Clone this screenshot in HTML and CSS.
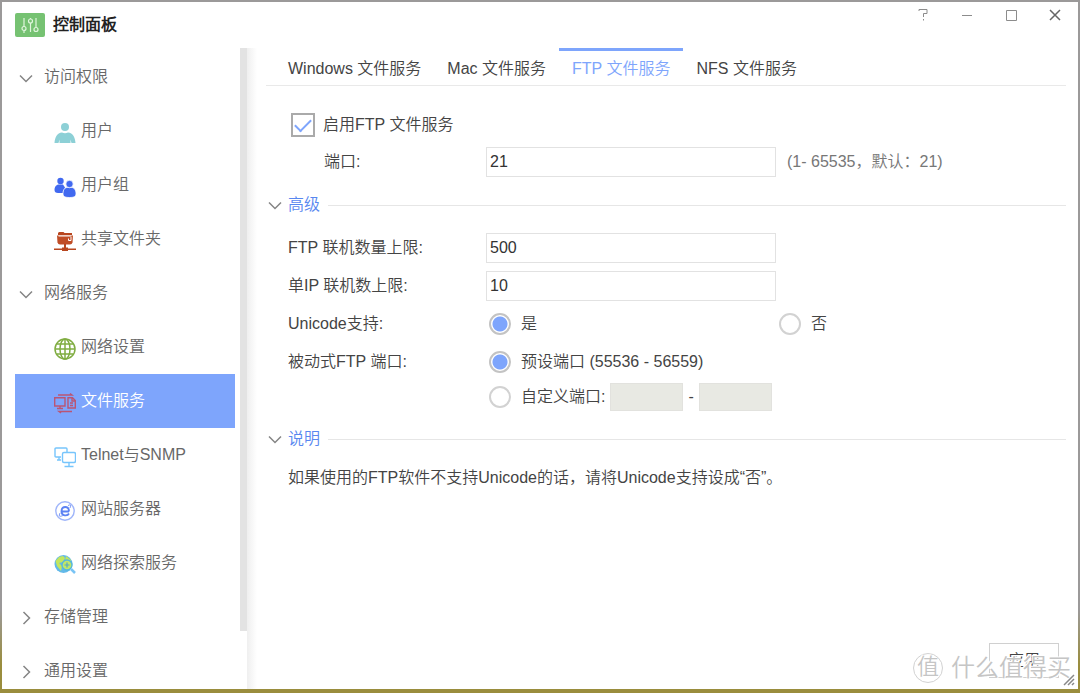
FILE: index.html
```html
<!DOCTYPE html>
<html lang="zh-CN">
<head>
<meta charset="utf-8">
<title>控制面板</title>
<link rel="stylesheet" href="styles.css">
</head>
<body>
<div class="window">
  <header class="titlebar">
    <svg class="app-icon" viewBox="0 0 30 24" aria-hidden="true"><rect width="30" height="24" rx="2" fill="#76c272"/><g fill="none" stroke="#e0f5dd" stroke-width="1.2"><path d="M9 5v9M9 18v2M15.500 5v1M15.500 10v9M21 5v9.500"/><circle cx="9" cy="15.500" r="2"/><circle cx="15.500" cy="8" r="2"/><circle cx="21" cy="16.500" r="2"/></g></svg>
    <h1 class="title">控制面板</h1>
    <div class="window-buttons">
      <button class="window-button" type="button" aria-label="帮助"><svg viewBox="0 0 14 14"><path d="M3 3V1.500H11V5.500H7.500V9M7.500 11V12.500"/></svg></button>
      <button class="window-button" type="button" aria-label="最小化"><svg viewBox="0 0 14 14"><path d="M2 7.500H12"/></svg></button>
      <button class="window-button" type="button" aria-label="最大化"><svg viewBox="0 0 14 14"><path d="M2.500 2.500H12.500V12.500H2.500Z"/></svg></button>
      <button class="window-button close" type="button" aria-label="关闭"><svg viewBox="0 0 14 14"><path d="M2 2L12 12M12 2L2 12"/></svg></button>
    </div>
  </header>
  <div class="body">
    <nav class="sidebar">
      <div class="nav-list">
        <button class="group" type="button"><svg class="chevron" viewBox="0 0 14 14"><path d="M1 4.500L7 10.500L13 4.500"/></svg>访问权限</button>
        <a class="item" href="#"><svg class="icon" viewBox="0 0 22 22"><g fill="#8dd0d6"><circle cx="11" cy="5" r="4"/><path d="M.5 21C1 15 3 11 8 10.500Q11 12 14 10.500C19 11 21 15 21.500 21H17.500L16.500 17.500V21H5.500V17.500L4.500 21Z"/></g></svg>用户</a>
        <a class="item" href="#"><svg class="icon" viewBox="0 0 22 22"><g fill="#4169f0"><circle cx="6.500" cy="5" r="3.200"/><path d="M.5 14C.5 10 3 8.500 5 8.500H9L11 11.500L9 17H4Q.5 17 .5 14Z"/></g><g fill="#4169f0" stroke="#fff" stroke-width=".8"><path d="M9 17.500C9 13.500 11 11.500 13 11.500H18C20 11.500 22 14 22 17.500C22 20.500 20 21.500 15.500 21.500S9 20.500 9 17.500Z"/><circle cx="15.500" cy="8" r="3.700"/></g></svg>用户组</a>
        <a class="item" href="#"><svg class="icon" viewBox="0 0 22 22"><path d="M5 2H9.500L10.500 3H18V5H4V3Z" fill="#b8461f"/><path d="M3 5.500H19L18.500 12.500Q18 14.500 16 14.500H6Q4 14.500 3.500 12.500Z" fill="#c04d26"/><path d="M4.500 6H17.500M14.500 8.500V10.500H17V7" stroke="#fff" fill="none"/><path d="M10 14H12V17.500H14V18.500H22V20H14V21H8V20H0V18.500H8V17.500H10Z" fill="#b8461f"/></svg>共享文件夹</a>
        <button class="group" type="button"><svg class="chevron" viewBox="0 0 14 14"><path d="M1 4.500L7 10.500L13 4.500"/></svg>网络服务</button>
        <a class="item" href="#"><svg class="icon" viewBox="0 0 22 22" fill="none" stroke="#80ad42" stroke-width="1.500"><circle cx="11" cy="11" r="10"/><ellipse cx="11" cy="11" rx="5" ry="10"/><path d="M11 1V21M1 11H21M2.500 6H19.500M2.500 16H19.500"/></svg>网络设置</a>
        <a class="item selected" href="#" aria-current="page"><svg class="icon" viewBox="0 0 22 22" fill="none" stroke="#ba5574" stroke-width="1.400"><path d="M4 3H18L16 1.500M18 19.500H5L7 21M.7 5.700H11V14H.7ZM6 14V16.500M3 16.500H9M14 5.700H18.500L21.300 8.500V16H14ZM18 6V9H21M16 11H19M16 13.500H19"/></svg>文件服务</a>
        <a class="item" href="#"><svg class="icon" viewBox="0 0 22 22" fill="none" stroke="#77c5fc" stroke-width="1.400"><path d="M7 11H2Q1 11 1 10V3Q1 2 2 2H12Q13 2 13 3V6M5 11V14M3 14H7"/><rect x="8.500" y="6.500" width="13" height="10" rx="1.500"/><path d="M15 17V20M10.500 20.500H19.500"/></svg>Telnet与SNMP</a>
        <a class="item" href="#"><svg class="icon" viewBox="0 0 22 22" fill="none"><circle cx="11" cy="11" r="9.200" stroke="#9fb5fa" stroke-width="1.400"/><path d="M15 11.500H7.500C7.500 5.500 15 5.500 15 11.500M7.500 11.500C7.500 16 13.500 16.500 15 13.500" stroke="#5c82f3" stroke-width="1.800"/><path d="M14 5.500Q18 3.500 16 8M6 13Q3.500 18 9 15.500" stroke="#809cf5"/></svg>网站服务器</a>
        <a class="item" href="#"><svg class="icon" viewBox="0 0 22 22"><circle cx="9.500" cy="10" r="9" fill="#63b9e9"/><path d="M5 3L9 2L11 4L9 8L5 9L8 12L7 17L3 12L1.500 7ZM12 2L17 6L16 9L11 7Z" fill="#c3e65c"/><circle cx="13" cy="11" r="5" fill="#c1e669" stroke="#54b6dc" stroke-width="1.300"/><path d="M10.500 11H15.500M13 8.500V13.500" stroke="#54a9c3" stroke-width="1.200"/><path d="M17 15L21 19" stroke="#79c4f5" stroke-width="2.500"/></svg>网络探索服务</a>
        <button class="group" type="button"><svg class="chevron" viewBox="0 0 14 14"><path d="M4.500 1L10.500 7L4.500 13"/></svg>存储管理</button>
        <button class="group" type="button"><svg class="chevron" viewBox="0 0 14 14"><path d="M4.500 1L10.500 7L4.500 13"/></svg>通用设置</button>
      </div>
      <div class="scroll-track"><div class="scroll-thumb"></div></div>
    </nav>
    <main class="main">
      <div class="tabs" role="tablist">
        <button class="tab" type="button" role="tab">Windows 文件服务</button>
        <button class="tab" type="button" role="tab">Mac 文件服务</button>
        <button class="tab active" type="button" role="tab" aria-selected="true">FTP 文件服务</button>
        <button class="tab" type="button" role="tab">NFS 文件服务</button>
      </div>
      <form class="form">
        <div class="row enable">
          <input class="check" type="checkbox" id="enable" checked><label for="enable">启用FTP 文件服务</label>
        </div>
        <div class="row">
          <label class="label indented" for="port">端口:</label>
          <input class="field" type="text" id="port" value="21">
          <span class="hint">(1- 65535，默认：21)</span>
        </div>
        <h2 class="section"><svg class="chevron" viewBox="0 0 14 14"><path d="M1 4.500L7 10.500L13 4.500"/></svg>高级</h2>
        <div class="row">
          <label class="label" for="max">FTP 联机数量上限:</label>
          <input class="field" type="text" id="max" value="500">
        </div>
        <div class="row">
          <label class="label" for="max-ip">单IP 联机数上限:</label>
          <input class="field" type="text" id="max-ip" value="10">
        </div>
        <div class="row">
          <span class="label">Unicode支持:</span>
          <label class="option wide"><input class="radio" type="radio" name="unicode" checked>是</label>
          <label class="option"><input class="radio" type="radio" name="unicode">否</label>
        </div>
        <div class="row">
          <span class="label">被动式FTP 端口:</span>
          <label class="option"><input class="radio" type="radio" name="passive" checked>预设端口 (55536 - 56559)</label>
        </div>
        <div class="row custom">
          <label class="option"><input class="radio" type="radio" name="passive">自定义端口:</label>
          <input class="range" type="text" aria-label="起始端口" disabled>
          <span>-</span>
          <input class="range" type="text" aria-label="结束端口" disabled>
        </div>
        <h2 class="section"><svg class="chevron" viewBox="0 0 14 14"><path d="M1 4.500L7 10.500L13 4.500"/></svg>说明</h2>
        <p class="note">如果使用的FTP软件不支持Unicode的话，请将Unicode支持设成“否”。</p>
        <div class="actions"><button class="apply" type="button">应用</button></div>
      </form>
    </main>
  </div>
  <div class="watermark"><span class="watermark-badge">值</span><span>什么值得买</span></div>
  <svg class="grip" viewBox="0 0 12 12"><path d="M1 11L11 1M5 11L11 5M9 11L11 9"/></svg>
</div>
</body>
</html>
```
FILE: styles.css
```css
* { box-sizing: border-box; }

body {
  margin: 0;
  height: 100vh;
  padding: 2px 2px 4px;
  background: linear-gradient(#9b9999 0 88%, #9a8d3d 96%);
  color: #444;
  font: 350 16px/24px "Liberation Sans", "Noto Sans CJK SC DemiLight", "Noto Sans CJK SC", sans-serif;
}

button, input { font: inherit; color: inherit; }
button { border: 0; padding: 0; background: none; }
svg { flex: none; }

.window {
  position: relative;
  display: flex;
  flex-direction: column;
  height: 100%;
  background: #fff;
}

.titlebar {
  display: flex;
  align-items: flex-start;
  height: 46px;
  flex: none;
  padding: 11px 12px 0 13px;
}
.app-icon { width: 30px; height: 24px; }
.title { margin: 0 0 0 8px; font-size: 16px; font-weight: 700; line-height: 24px; color: #222; }
.window-buttons { display: flex; gap: 30px; margin: -5px 4px 0 auto; }
.window-button { width: 14px; height: 14px; display: flex; }
.window-button svg { width: 14px; height: 14px; fill: none; stroke: #8c8c8c; }
.window-button.close svg { stroke: #666; stroke-width: 1.5; }

.body { display: flex; flex: 1; min-height: 0; }

.sidebar { display: flex; flex: none; width: 245px; }
.nav-list { flex: 1; padding: 2px 5px 0 13px; overflow: hidden; color: #686868; }
.group, .item { display: flex; align-items: center; width: 100%; height: 54px; color: inherit; text-decoration: none; }
.group { gap: 11px; padding-left: 4px; }
.item { gap: 5px; padding-left: 39px; }
.item.selected { background: #7ea5fc; color: #fff; }
.icon { width: 22px; height: 22px; margin-top: 4px; }
.chevron { width: 14px; height: 14px; fill: none; stroke: #858585; stroke-width: 1.5; }
.group .chevron { margin-top: 2px; }
.scroll-track { width: 7px; }
.scroll-thumb { height: 91%; background: #e3e3e3; }

.main {
  display: flex;
  flex: 1;
  flex-direction: column;
  min-width: 0;
  padding: 0 12px 11px 19px;
  background: linear-gradient(90deg, #efefef, #fff 10px);
}

.tabs { display: flex; flex: none; height: 38px; padding-left: 9px; border-bottom: 1px solid #e9e9e9; }
.tab { padding: 2px 13px 0; border-top: 3px solid transparent; white-space: nowrap; }
.tab.active { border-top-color: #7ea5fc; color: #7ea5fc; }

.form { display: flex; flex: 1; flex-direction: column; gap: 8px; padding-top: 24px; }
.row { display: flex; align-items: center; min-height: 30px; padding-left: 22px; }
.label { flex: none; width: 198px; }
.label.indented { padding-left: 36px; }
.enable { gap: 8px; padding-left: 25px; margin-bottom: -1px; }

.check, .radio { flex: none; margin: 0; appearance: none; background: #fff; }
.check {
  width: 24px;
  height: 24px;
  border: 2px solid #aaa;
  display: grid;
  place-items: center;
}
.check:checked::before {
  content: "";
  width: 14px;
  height: 7px;
  border: solid #7ea5fc;
  border-width: 0 0 2px 2px;
  transform: translateY(-2px) rotate(-45deg);
}
.radio { width: 22px; height: 22px; border: 2px solid #d2d2d2; border-radius: 50%; }
.radio:checked { border-color: #c3c3c3; background: radial-gradient(circle, #7ea5fc 7px, #fff 8px); }

.field { width: 290px; height: 30px; padding: 0 3px; border: 1px solid #e2e2e2; background: #fff; color: #333; }
.hint { margin-left: 11px; color: #777; }

.section { display: flex; align-items: center; gap: 6px; height: 22px; margin: 9px 0; padding-left: 2px; font-size: 16px; font-weight: 350; color: #5887f0; }
.section::after { content: ""; flex: 1; height: 1px; margin-left: 2px; background: #e6e6e6; }

.option { display: flex; align-items: center; gap: 10px; padding-left: 3px; }
.option.wide { width: 290px; }
.custom { gap: 5px; margin-top: -3px; margin-bottom: -1px; padding-left: 220px; }
.range { width: 73px; height: 28px; border: 1px solid #e2e2de; background: #e8e9e3; }

.note { margin: -1px 0 0; padding-left: 22px; }
.actions { display: flex; justify-content: flex-end; margin-top: auto; padding-right: 7px; }
.apply { width: 70px; height: 35px; border: 1px solid #d0d0d0; background: #fff; }

.watermark {
  position: absolute;
  right: 7px;
  bottom: 5px;
  display: flex;
  align-items: center;
  gap: 8px;
  color: #c5c5c5;
  font-size: 24px;
  font-weight: 400;
  line-height: 32px;
  text-shadow: -1px -1px #fff, 1px 1px #fff;
  pointer-events: none;
}
.watermark-badge { width: 30px; height: 30px; border: 1px solid #d2d2d2; border-radius: 50%; font-size: 22px; line-height: 26px; text-align: center; }
.grip { position: absolute; right: 3px; bottom: 3px; width: 12px; height: 12px; fill: none; stroke: #888; stroke-width: 1.5; }
```
